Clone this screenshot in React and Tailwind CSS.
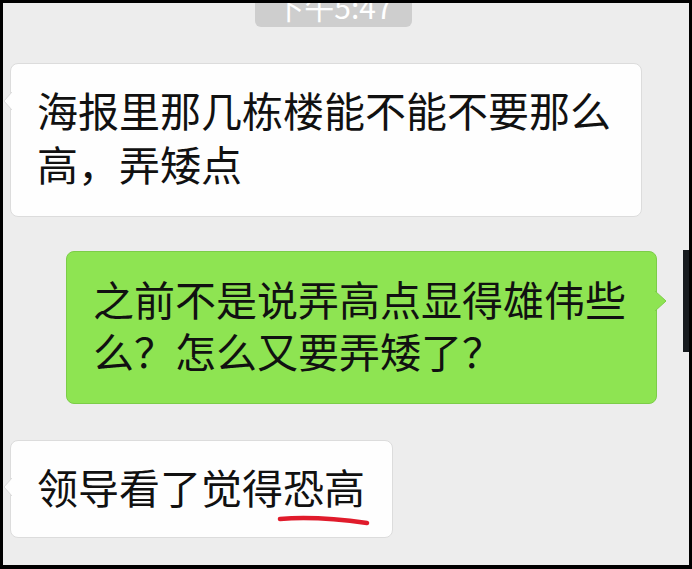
const font = { fontFamily: '"Noto Sans CJK SC", "Noto Sans", sans-serif' };

const LeftTail = ({ top }) => (
  <div className={`absolute left-[-8px] ${top}`}>
    <svg width="9" height="18" viewBox="0 0 9 18">
      <path d="M9 0 L1 9 L9 18 Z" fill="#fefefe" />
      <path d="M9 0 L1 9 L9 18" fill="none" stroke="#dcdcdc" strokeWidth="1" />
    </svg>
  </div>
);

export default function App() {
  return (
    <div
      className="w-[692px] h-[569px] bg-black pt-[3px] pl-[3px] pr-[3px] pb-[4px]"
      style={font}
    >
      <div className="relative h-full bg-[#ededed] overflow-hidden flex flex-col text-[#111]">
        {/* time stamp, cut off at the top */}
        <div className="ml-[252px] w-[157px] h-[24px] bg-[#cecece] rounded-b-[6px] overflow-hidden flex justify-center">
          <span className="text-white text-[30px] leading-[30px] mt-[-12px] whitespace-nowrap">
            下午5:47
          </span>
        </div>

        {/* incoming */}
        <div className="relative ml-[7px] mt-[36px] w-[632px] bg-[#fefefe] border border-[#dcdcdc] rounded-[8px] pl-[26px] pt-[18px] pb-[26px] text-[41px] leading-[54px] whitespace-nowrap">
          <LeftTail top="top-[28px]" />
          海报里那几栋楼能不能不要那么
          <br />
          高，弄矮点
        </div>

        {/* outgoing */}
        <div className="relative ml-[63px] mt-[34px] w-[591px] bg-[#8ee452] border border-[#7ccd48] rounded-[8px] pl-[26px] pt-[20px] pb-[27px] text-[41px] leading-[52px] whitespace-nowrap">
          <div className="absolute right-[-11px] top-[39px]">
            <svg width="12" height="20" viewBox="0 0 12 20">
              <path d="M0 0 L11 10 L0 20 Z" fill="#8ee452" />
              <path d="M0 0 L11 10 L0 20" fill="none" stroke="#7ccd48" strokeWidth="1" />
            </svg>
          </div>
          之前不是说弄高点显得雄伟些
          <br />
          么？怎么又要弄矮了？
        </div>

        {/* incoming */}
        <div className="relative ml-[7px] mt-[36px] w-[383px] bg-[#fefefe] border border-[#dcdcdc] rounded-[8px] pl-[26px] pt-[18px] pb-[24px] text-[41px] leading-[54px] whitespace-nowrap">
          <LeftTail top="top-[37px]" />
          领导看了觉得恐高
          <svg
            className="absolute left-[266px] top-[74px]"
            width="94"
            height="12"
            viewBox="0 0 94 12"
          >
            <path
              d="M3 4 Q 40 1 90 8"
              fill="none"
              stroke="#e01b2b"
              strokeWidth="4.5"
              strokeLinecap="round"
            />
          </svg>
        </div>

        {/* dark strip on the right edge */}
        <div className="absolute right-0 top-[247px] w-[6px] h-[102px] bg-[#161a1e]" />
      </div>
    </div>
  );
}
